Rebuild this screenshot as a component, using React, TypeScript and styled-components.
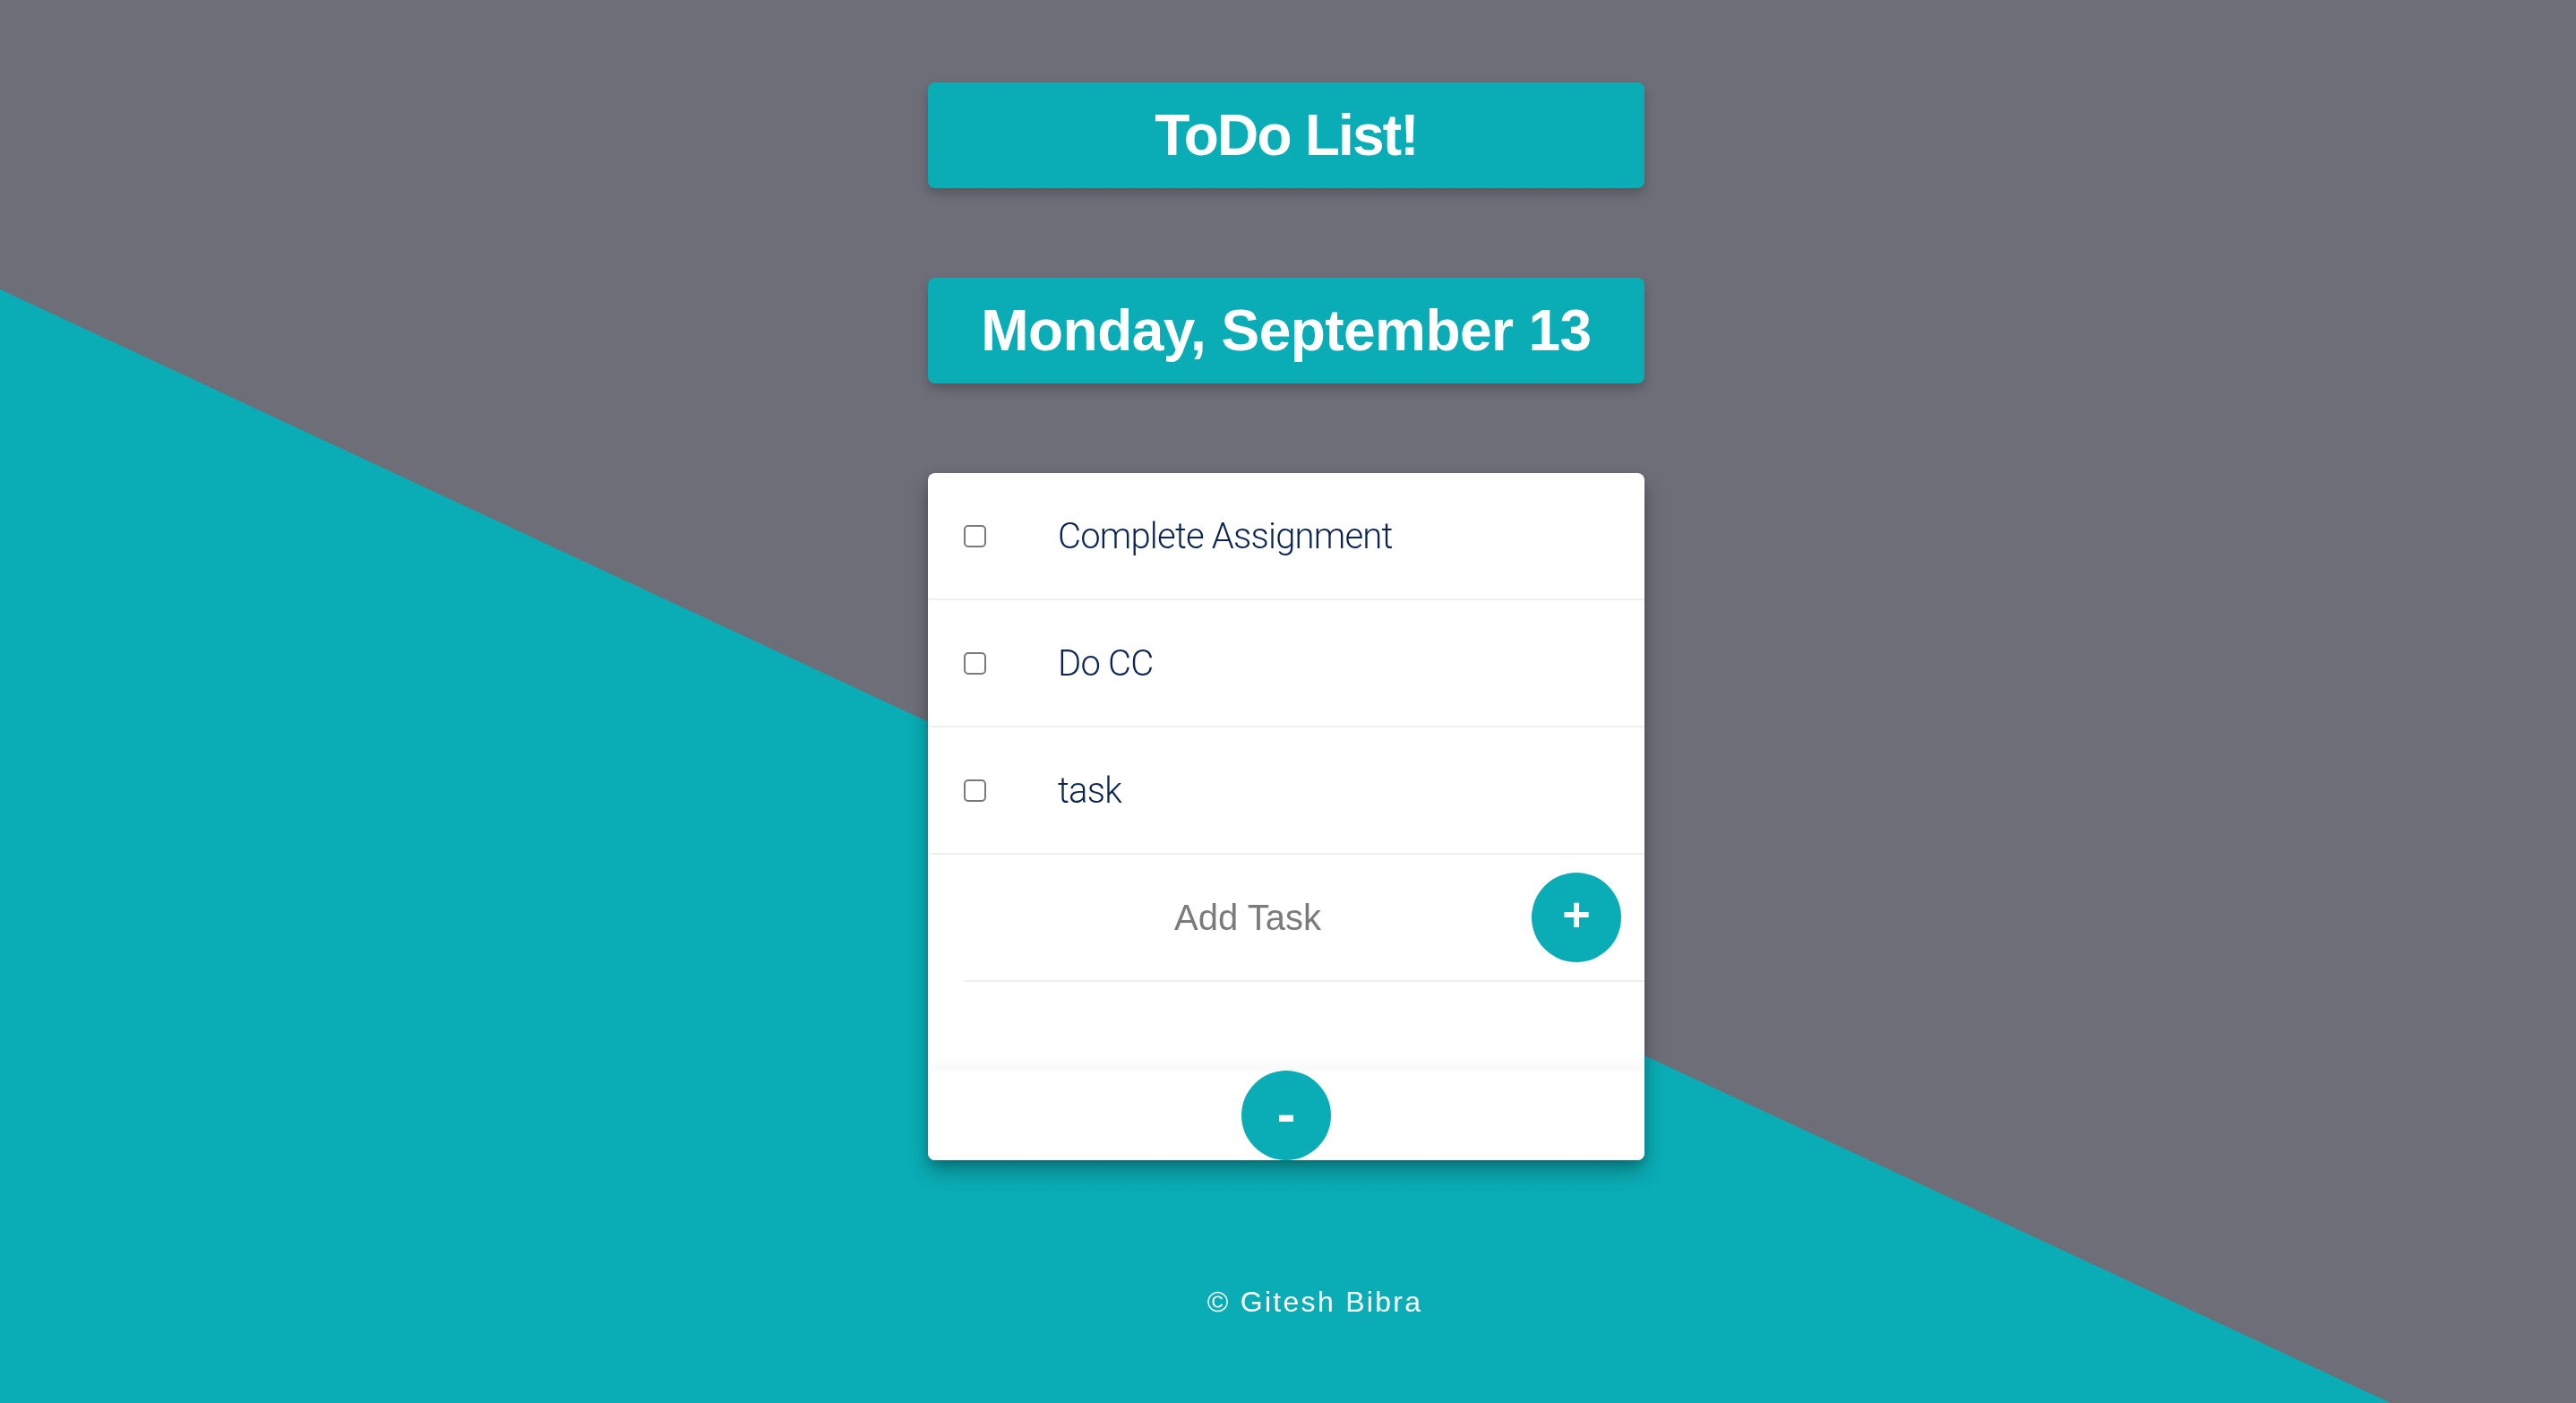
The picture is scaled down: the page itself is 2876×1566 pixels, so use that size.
import React from "react";
import styled, { createGlobalStyle } from "styled-components";

const GlobalStyle = createGlobalStyle`
  html, body {
    margin: 0;
    padding: 0;
  }
  body {
    background: #6d6e77;
    font-family: "Liberation Sans", Arial, sans-serif;
    overflow: hidden;
  }
  * { box-sizing: border-box; }
`;

const teal = "#0aadb5";

const Page = styled.div`
  min-height: 100vh;
  display: flex;
  flex-direction: column;
  align-items: center;
  padding-top: 92px;
  padding-right: 4px;

  &::before {
    content: "";
    position: fixed;
    inset: 0;
    background: ${teal};
    clip-path: polygon(0 20.63%, 92.8% 100%, 0 100%);
    z-index: -1;
  }
`;

const Banner = styled.h1<{ $gap?: number; $tracking: number }>`
  margin: ${(p) => p.$gap ?? 0}px 0 0;
  width: 800px;
  height: 118px;
  display: flex;
  align-items: center;
  justify-content: center;
  background: ${teal};
  border-radius: 8px;
  box-shadow: 0 6px 12px rgba(0, 0, 0, 0.22);
  color: #fff;
  font-family: "Liberation Sans", Arial, sans-serif;
  font-weight: 700;
  font-size: 64px;
  letter-spacing: ${(p) => p.$tracking}px;
`;

const Card = styled.section`
  margin-top: 100px;
  width: 800px;
  background: #fff;
  border-radius: 8px;
  overflow: hidden;
  box-shadow: 0 12px 22px rgba(0, 0, 0, 0.3), 0 4px 8px rgba(0, 0, 0, 0.12);
  display: flex;
  flex-direction: column;
`;

const TaskRow = styled.label`
  height: 142px;
  display: flex;
  align-items: center;
  padding-left: 40px;
  border-bottom: 2px solid #f0f0f0;
`;

const Check = styled.input.attrs({ type: "checkbox" })`
  appearance: none;
  margin: 0;
  width: 25px;
  height: 25px;
  border: 2px solid #7a7a7a;
  border-radius: 5px;
  background: #fff;
  flex: none;
`;

const TaskText = styled.span`
  margin-left: 80px;
  font-family: Roboto, "Liberation Sans", sans-serif;
  font-weight: 300;
  font-size: 40px;
  color: #0b2454;
  letter-spacing: -0.8px;
`;

const AddRow = styled.form`
  height: 142px;
  margin-left: 40px;
  display: flex;
  align-items: center;
  padding-right: 26px;
  border-bottom: 2px solid #f0f0f0;
`;

const AddInput = styled.input`
  flex: 1;
  min-width: 0;
  border: none;
  outline: none;
  background: transparent;
  text-align: center;
  font-family: "Liberation Sans", Arial, sans-serif;
  font-size: 40px;
  color: #333;
  &::placeholder {
    color: #7b7b7b;
  }
`;

const RoundButton = styled.button<{ $size: number; $lift?: number }>`
  width: 100px;
  height: 100px;
  flex: none;
  border: none;
  border-radius: 50%;
  background: ${teal};
  color: #fff;
  font-family: "Liberation Sans", Arial, sans-serif;
  font-weight: 700;
  font-size: ${(p) => p.$size}px;
  line-height: 1;
  padding: 0 0 ${(p) => p.$lift ?? 0}px;
  display: flex;
  align-items: center;
  justify-content: center;
  cursor: pointer;
`;

const Spacer = styled.div`
  height: 99px;
`;

const BottomBar = styled.div`
  height: 100px;
  display: flex;
  justify-content: center;
  background: #fff;
  box-shadow: 0 -8px 16px rgba(0, 0, 0, 0.03);
`;

const Footer = styled.footer`
  margin-top: 142px;
  padding-left: 64px;
  color: #fff;
  font-family: "Liberation Sans", Arial, sans-serif;
  font-size: 32px;
  line-height: 1;
  letter-spacing: 2.3px;
`;

const tasks = ["Complete Assignment", "Do CC", "task"];

export default function App() {
  return (
    <>
      <GlobalStyle />
      <Page>
        <Banner $tracking={-1.8}>ToDo List!</Banner>
        <Banner $gap={100} $tracking={-0.55}>Monday, September 13</Banner>
        <Card>
          {tasks.map((t) => (
            <TaskRow key={t}>
              <Check />
              <TaskText>{t}</TaskText>
            </TaskRow>
          ))}
          <AddRow onSubmit={(e) => e.preventDefault()}>
            <AddInput placeholder="Add Task" />
            <RoundButton type="submit" $size={54} $lift={8}>+</RoundButton>
          </AddRow>
          <Spacer />
          <BottomBar>
            <RoundButton type="button" $size={62} $lift={4}>-</RoundButton>
          </BottomBar>
        </Card>
        <Footer>© Gitesh Bibra</Footer>
      </Page>
    </>
  );
}
